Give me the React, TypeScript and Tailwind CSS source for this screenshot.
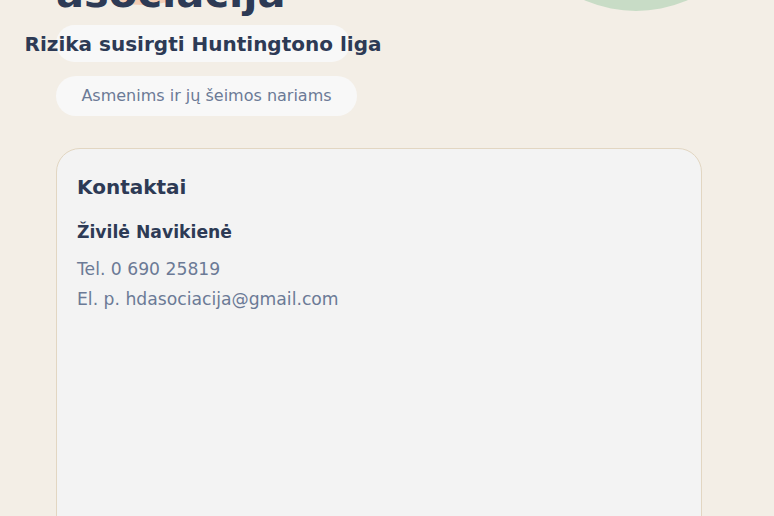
const ink = 'text-[#2d3a55]'
const muted = 'text-[#6b7a96]'

function Pill({ children, className = '' }: { children: React.ReactNode; className?: string }) {
  return (
    <div
      className={`flex items-center justify-center rounded-full bg-[#f8f8f8] whitespace-nowrap ${className}`}
    >
      {children}
    </div>
  )
}

export default function App() {
  return (
    <div
      className="relative h-[516px] overflow-hidden bg-[#f3eee6]"
      style={{ fontFamily: '"DejaVu Sans", Verdana, sans-serif' }}
    >
      {/* decorative blobs */}
      <div className="absolute left-[508px] top-[-245px] size-[256px] rounded-full bg-[#c8dcc6]" />
      <div className="absolute left-[43px] top-[-195px] size-[200px] rounded-full bg-[#f2cdb5]" />

      <div className="relative px-[56px]">
        <h1 className={`-mt-[32px] text-[41.6px] leading-[50px] font-bold ${ink}`}>asociacija</h1>

        <Pill className="mt-[7px] h-[37px] w-[294px]">
          <h2 className={`text-[20px] font-bold ${ink}`}>Rizika susirgti Huntingtono liga</h2>
        </Pill>

        <Pill className={`mt-[14px] h-[40px] w-[301px] text-[16px] ${muted}`}>
          Asmenims ir jų šeimos nariams
        </Pill>

        <section className="mt-[32px] h-[420px] w-[646px] rounded-[24px] border border-[#e2d6c2] bg-[#f3f3f3] px-5 pt-6">
          <h3 className={`text-[20px] leading-[28px] font-bold ${ink}`}>Kontaktai</h3>
          <p className={`mt-[18px] text-[17.2px] leading-[26px] font-bold ${ink}`}>Živilė Navikienė</p>
          <div className={`mt-[9px] text-[17.2px] leading-[30px] ${muted}`}>
            <p>Tel. 0 690 25819</p>
            <p>El. p. hdasociacija@gmail.com</p>
          </div>
        </section>
      </div>
    </div>
  )
}
